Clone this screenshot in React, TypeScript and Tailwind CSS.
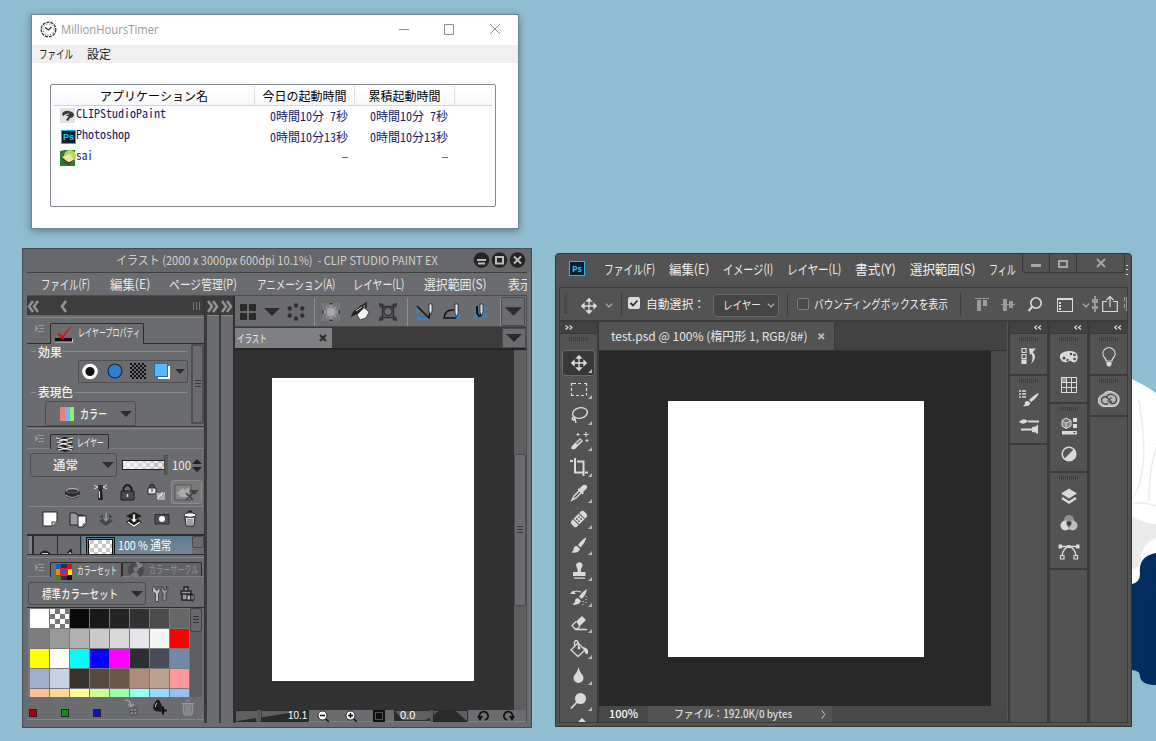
import React, { useLayoutEffect, useRef } from "react";

type KidProps = { className?: string; children?: React.ReactNode };

/* Text squeezed or stretched horizontally to the width of its box. */
function Fit({ className = "", children }: KidProps) {
  const box = useRef<HTMLSpanElement>(null);
  const inner = useRef<HTMLSpanElement>(null);
  useLayoutEffect(() => {
    if (!box.current || !inner.current) return;
    const natural = inner.current.offsetWidth;
    if (natural > 0) inner.current.style.transform = `scaleX(${box.current.offsetWidth / natural})`;
  }, [children]);
  return (
    <span ref={box} className={`block shrink-0 whitespace-pre leading-none ${className}`}>
      <span ref={inner} className="inline-block origin-left">{children}</span>
    </span>
  );
}

type IcoProps = KidProps & { vb?: string; crisp?: boolean };
function Ico({ className = "size-5", vb = "0 0 20 20", crisp, children }: IcoProps) {
  return (
    <svg viewBox={vb} className={`block shrink-0 ${className}`} fill="none" shapeRendering={crisp ? "crispEdges" : undefined}>
      {children}
    </svg>
  );
}

/* ---------- Desktop wallpaper ---------- */
function Wallpaper() {
  return (
    <Ico className="absolute left-[1132px] top-[370px] h-[320px] w-[24px]" vb="1132 370 24 320">
      <path d="M1132 379Q1145 385 1156 393V560L1132 590Z" fill="#fff" />
      <path d="M1138.500 399Q1146 440 1143 465Q1141 485 1133 498M1156 447Q1149 470 1149 501M1132 504Q1144 501 1156 506" stroke="#ededed" strokeWidth="1.5" />
      <path d="M1132 516Q1142 523 1156 524V538Q1140 545 1141 562Q1139 569 1132 569Z" fill="#ebebeb" />
      <path d="M1132 584Q1140 582 1140 574Q1138 556 1156 553V685Q1142 685 1140 677Q1141 671 1132 670Z" fill="#002f5f" />
    </Ico>
  );
}

/* ---------- MillionHoursTimer ---------- */
function TimerRow({ icon, name, nameClass, time }: { icon: React.ReactNode; name: string; nameClass: string; time: string | null }) {
  return (
    <div className="flex h-[21px] text-[12px] text-[#16216a]">
      <div className="flex w-[200px] pl-[6px]">
        <span className="pt-[2px]">{icon}</span>
        <Fit className={`mt-[1px] ${nameClass}`}>{name}</Fit>
      </div>
      {[0, 1].map((i) => (
        <div key={i} className="flex w-[100px] justify-end pr-[6px] pt-[4px]">
          {time ? <Fit className="w-[78px]">{time}</Fit> : <span className="mt-[5px] h-px w-[6px] bg-[#5a6294]" />}
        </div>
      ))}
    </div>
  );
}

function TimerWindow() {
  return (
    <div className="absolute left-[31px] top-[14px] flex h-[215px] w-[488px] flex-col border border-[#6d8792] bg-white font-['Noto_Sans_CJK_JP',sans-serif] shadow-[0_2px_8px_rgba(0,0,0,0.35)]">
      <div className="flex h-[30px] items-center pb-[2px] pl-[8px]">
        <Ico className="size-[17px]" vb="0 0 17 17">
          <circle cx="8.500" cy="8.500" r="7.300" stroke="#333" strokeWidth="1.300" strokeDasharray="3 1" />
          <circle cx="8.500" cy="8.500" r="5.500" stroke="#555" strokeWidth="1" strokeDasharray="1 1.880" />
          <path d="M5 6.500L8.500 9L11.500 6" stroke="#333" strokeWidth="1.200" />
        </Ico>
        <Fit className="ml-[4px] w-[98px] font-['Open_Sans',sans-serif] text-[13px] text-[#999]">MillionHoursTimer</Fit>
        <Ico className="ml-[240px] h-[12px] w-[104px]" vb="0 0 104 12">
          <path d="M0 6.500H10M45.500 1.500H54.500V11.500H45.500Z" stroke="#8c8c8c" />
          <path d="M91 1L101 11M101 1L91 11" stroke="#8c8c8c" />
        </Ico>
      </div>
      <div className="flex h-[18px] items-center gap-[14px] bg-[#f0f0f0] pl-[7px] text-[12px] text-[#222]">
        <Fit className="w-[34px]">ファイル</Fit>
        <Fit className="w-[24px]">設定</Fit>
      </div>
      <div className="ml-[18px] mt-[21px] flex h-[123px] w-[446px] flex-col rounded-[2px] border border-[#828790] px-[3px] pt-px font-['Noto_Sans_Mono_CJK_JP','Noto_Sans_CJK_JP',monospace]">
        <div className="flex h-[20px] border-b border-[#d5d5d5] bg-gradient-to-b from-white to-[#f7f8fa] text-[12px] font-medium text-black">
          <div className="flex w-[201px] items-center justify-center border-r border-[#dedfe1]"><Fit className="w-[108px]">アプリケーション名</Fit></div>
          <div className="flex w-[100px] items-center justify-center border-r border-[#dedfe1]"><Fit className="w-[84px]">今日の起動時間</Fit></div>
          <div className="flex w-[100px] items-center justify-center border-r border-[#dedfe1]"><Fit className="w-[72px]">累積起動時間</Fit></div>
        </div>
        <TimerRow
          name="CLIPStudioPaint"
          nameClass="w-[90px]"
          time="0時間10分 7秒"
          icon={
            <Ico className="size-[16px]" vb="0 0 16 16">
              <path d="M0 0H15V15H0Z" fill="#e2e2e2" />
              <path d="M2 6Q4 2 9 3Q14 4 14 7Q13 10 10 10L8 13L6 12L9 8Q7 9 6 7L10 6Q8 5 6 6L3 8Z" fill="#3a3a3a" />
            </Ico>
          }
        />
        <TimerRow
          name="Photoshop"
          nameClass="w-[54px]"
          time="0時間10分13秒"
          icon={
            <span className="ml-px mt-px flex h-[14px] w-[15px] items-center justify-center border border-[#17b4ea] bg-[#04202f] font-['Liberation_Sans',sans-serif] text-[9px] font-bold leading-none text-[#20c5f5]">Ps</span>
          }
        />
        <TimerRow
          name="sai"
          nameClass="w-[17px]"
          time={null}
          icon={
            <Ico className="size-[16px]" vb="0 0 16 16">
              <path d="M0 1L5 0H15V10L15 16H0Z" fill="#2e7d32" />
              <circle cx="10" cy="6" r="6" fill="#b5dc62" />
              <path d="M2 7L10 4L14 10L8 12Z" fill="#f3e6a4" />
              <path d="M1 8L9 13L14 10M3 12L10 15" stroke="#4b3312" />
            </Ico>
          }
        />
      </div>
    </div>
  );
}

/* ---------- CLIP STUDIO PAINT ---------- */
const Tri = ({ className = "h-[6px] w-[12px]" }: { className?: string }) => (
  <Ico className={className} vb="0 0 12 6"><path d="M0 0H12L6 6Z" fill="#2c2c2c" /></Ico>
);

const TabMenu = () => (
  <Ico className="h-[9px] w-[10px]" vb="0 0 10 9">
    <path d="M0 1L4 4.500L0 8Z" fill="#8e8f91" />
    <path d="M3 1.500H9M5 4.500H9M3 7.500H9" stroke="#9a9b9d" />
  </Ico>
);

function ChevronRow({ d }: { d: string }) {
  return <Ico className="h-[13px] w-[12px]" vb="0 0 12 13"><path d={d} stroke="#929292" strokeWidth="2.600" /></Ico>;
}

const Checker = ({ id, a, b, s }: { id: string; a: string; b: string; s: number }) => (
  <pattern id={id} width={s * 2} height={s * 2} patternUnits="userSpaceOnUse">
    <rect width={s * 2} height={s * 2} fill={a} />
    <path d={`M0 0H${s}V${s}H0ZM${s} ${s}H${s * 2}V${s * 2}H${s}Z`} fill={b} />
  </pattern>
);

function LayerProperty() {
  return (
    <>
      <div className="flex h-[26px] items-end border-b border-[#2c2c2c]">
        <div className="flex h-full w-[23px] items-center pb-[4px] pl-[8px]"><TabMenu /></div>
        <div className="mb-[-1px] flex h-[21px] w-[94px] items-center rounded-t-[2px] border border-b-0 border-[#2c2c2c] bg-[#6b6c6f] pb-[3px] pl-[4px]">
          <Ico className="mt-[3px] h-[18px] w-[19px]" vb="0 0 19 18">
            <path d="M0 13H17V17H0Z" fill="#111" /><path d="M0 17H18M17.500 14V17" stroke="#eee" strokeWidth="0.800" />
            <path d="M2 9L5 8L8 11Q11 4 18 1Q11 7 8 15Z" fill="#d31414" />
          </Ico>
          <Fit className="ml-[4px] w-[62px] text-[11px] text-[#eee]">レイヤープロパティ</Fit>
        </div>
      </div>
      <div className="flex h-[82px] overflow-hidden">
        <div className="flex w-[163px] shrink-0 flex-col text-[12px] text-[#f2f2f2]">
          <div className="flex h-[17px] items-center gap-px pl-[4px]">
            <i className="h-px w-[5px] bg-[#8c8d8f]" /><Fit className="ml-px w-[24px] font-medium">効果</Fit><i className="h-px w-[124px] bg-[#8c8d8f]" />
          </div>
          <div className="ml-[51px] flex h-[24px] w-[110px] items-center gap-[8px] rounded-[2px] border border-[#4e4f51] pl-[3px]">
            <Ico className="size-[17px]" vb="0 0 17 17"><circle cx="8" cy="8.500" r="6.200" fill="#111" stroke="#fff" strokeWidth="3.200" /></Ico>
            <Ico className="-ml-px size-[17px]" vb="0 0 17 17"><circle cx="7.500" cy="9" r="7" fill="#2e80d4" /><circle cx="9" cy="8" r="7" stroke="#1b2733" strokeWidth="1.200" /></Ico>
            <Ico className="-ml-px size-[16px]" vb="0 0 16 16" crisp><defs><Checker id="dots" a="#6b6c6f" b="#111" s={2} /></defs><rect width="16" height="16" fill="url(#dots)" /></Ico>
            <Ico className="size-[16px]" vb="0 0 16 16" crisp><path d="M4 3H16V16H4Z" fill="#fff" /><path d="M.500 .500H13.500V13.500H.500Z" fill="#55b8fb" stroke="#2b6da8" /></Ico>
            <Tri className="-ml-[3px] h-[5px] w-[10px]" />
          </div>
          <div className="flex h-[20px] items-center gap-px pl-[4px]">
            <i className="h-px w-[5px] bg-[#8c8d8f]" /><Fit className="ml-px w-[35px] font-medium">表現色</Fit><i className="h-px w-[113px] bg-[#8c8d8f]" />
          </div>
          <div className="ml-[18px] flex h-[26px] w-[91px] items-center rounded-t-[3px] border border-[#4e4f51] pl-[14px]">
            <Ico className="h-[14px] w-[14px]" vb="0 0 14 14" crisp><path d="M0 0H5V14H0Z" fill="#e9807d" /><path d="M5 0H10V14H5Z" fill="#76b6e6" /><path d="M10 0H14V14H10Z" fill="#8ef46c" /></Ico>
            <Fit className="ml-[6px] w-[27px] font-medium">カラー</Fit>
            <Tri className="ml-[13px] h-[6px] w-[12px]" />
          </div>
        </div>
        <div className="ml-px flex h-[80px] w-[13px] items-center justify-center rounded-[2px] border-2 border-[#4e4f51]">
          <Ico className="h-[8px] w-[6px]" vb="0 0 6 8" crisp><path d="M0 .500H6M0 3.500H6M0 6.500H6" stroke="#3a3a3a" /></Ico>
        </div>
      </div>
    </>
  );
}

function LayerPanel() {
  return (
    <>
      <div className="flex h-[20px] items-end border-b border-[#808183]">
        <div className="flex h-full w-[23px] items-center pl-[8px]"><TabMenu /></div>
        <div className="mb-[-1px] flex h-[15px] w-[59px] items-center rounded-t-[2px] border border-b-0 border-[#2c2c2c] bg-[#6b6c6f] pl-[5px]">
          <Ico className="mt-[4px] h-[16px] w-[18px]" vb="0 0 18 16">
            <path d="M0 3L9 1L18 3L9 6ZM0 8L9 5L18 8L9 11ZM0 13L9 10L18 13L9 16Z" fill="#222" />
            <path d="M0 2L12 5M3 5L17 2M2 9L16 6M1 6L15 10M2 14L17 11M2 11L16 14" stroke="#eee" strokeWidth="1.200" />
          </Ico>
          <Fit className="ml-[3px] w-[27px] text-[11px] text-[#eee]">レイヤー</Fit>
        </div>
      </div>
      <div className="flex h-[32px] items-center">
        <div className="ml-[3px] flex h-[24px] w-[87px] items-center rounded-[3px] border border-[#4e4f51] text-[12px] font-medium text-[#eee]">
          <Fit className="ml-[22px] w-[25px]">通常</Fit><Tri className="ml-[24px] h-[6px] w-[12px]" />
        </div>
        <Ico className="ml-[5px] h-[20px] w-[46px]" vb="0 0 46 20" crisp>
          <defs>
            <Checker id="op" a="#e9e9e9" b="#bdbdbd" s={4} />
            <linearGradient id="fade"><stop stopColor="#fff" stopOpacity=".6" /><stop offset="1" stopColor="#fff" stopOpacity="0" /></linearGradient>
          </defs>
          <path d="M.500 5.500H43V14.500H.500Z" fill="url(#op)" stroke="#222" />
          <path d="M1 6H42V14H1Z" fill="url(#fade)" />
          <path d="M42 0H46V20H42Z" fill="#5a5a5d" stroke="#47484a" />
        </Ico>
        <Fit className="ml-[4px] w-[19px] text-[12px] text-[#eee]">100</Fit>
        <Ico className="ml-px h-[15px] w-[10px]" vb="0 0 10 15"><path d="M0 6L5 1L10 6ZM0 9H10L5 14Z" fill="#222" /></Ico>
      </div>
      <div className="flex h-[24px] items-center pb-[2px] pl-[35px]">
        <Ico className="size-[21px]" vb="0 0 21 21"><ellipse cx="10.500" cy="11" rx="7.500" ry="5.500" fill="#2b2b2b" /><ellipse cx="10.500" cy="8.500" rx="6.500" ry="2.800" fill="#a9a9a9" /><ellipse cx="10.500" cy="9" rx="5.500" ry="1.800" fill="#333" /><path d="M4 13Q10 18 17 13" stroke="#aaa" /></Ico>
        <Ico className="ml-[7px] size-[21px]" vb="0 0 21 21"><path d="M9 7H12L13 18H8Z" fill="#222" /><path d="M9.500 9V16" stroke="#ddd" /><path d="M8 3H13V7H8Z" fill="#333" /><path d="M4 3L8 5L4 7M17 3L13 5L17 7" stroke="#ddd" /></Ico>
        <Ico className="ml-[6px] size-[21px]" vb="0 0 21 21"><path d="M6.500 10V6Q10.500 0 14.500 6V10" stroke="#1c1c1c" strokeWidth="2" /><path d="M4 9H17V18H4Z" fill="#4a4a4a" stroke="#1c1c1c" /><path d="M10.500 12V15" stroke="#ddd" strokeWidth="1.500" /></Ico>
        <Ico className="ml-[8px] size-[21px]" vb="0 0 21 21"><path d="M4 7V4Q6 1 8 4V7" stroke="#222" strokeWidth="1.500" /><path d="M2 6H10V12H2Z" fill="#e8e8e8" stroke="#222" /><path d="M6 7V10" stroke="#222" /><path d="M10 11H19V18H12" fill="#aaa" /><path d="M12 17V14H15V11H19" stroke="#fff" strokeDasharray="2 1" /></Ico>
        <div className="ml-[4px] flex h-[24px] w-[31px] items-center justify-center rounded-[3px] border border-[#8b8c8e] bg-[#77787a]">
          <Ico className="h-[17px] w-[25px]" vb="0 0 25 17"><path d="M1 1H17V16H1Z" fill="#858688" stroke="#555" /><path d="M3 9L9 4L11 6L15 3V13H7Z" fill="#a8a9aa" /><path d="M12 9L19 16M19 9L12 16" stroke="#444" strokeWidth="1.600" /><path d="M15 6H25L20 11Z" fill="#444" /></Ico>
        </div>
      </div>
      <div className="mx-px mt-px h-px bg-[#858688]" />
      <div className="flex h-[27px] items-center gap-[8px] pb-[3px] pl-[13px]">
        <Ico><path d="M3 3H17V13L12 17H3Z" fill="#fff" stroke="#222" /><path d="M17 13H12V17" fill="#ccc" stroke="#444" /></Ico>
        <Ico><path d="M2 4H8L9 6H15V16H2Z" fill="#99999b" stroke="#222" /><path d="M10 7H18V15L15 18H10Z" fill="#fff" stroke="#222" /><path d="M18 15H15V18" stroke="#444" /></Ico>
        <Ico><path d="M3 12L6 10H14L17 12L10 17Z" fill="#444648" /><path d="M3 8L7 5V9ZM17 8L13 5V9Z" fill="#444648" /><path d="M8.500 3H11.500V9H14L10 13L6 9H8.500Z" fill="#909194" stroke="#55565a" strokeWidth=".7" /></Ico>
        <Ico><path d="M2 7L10 3L18 7L10 11ZM2 13L6 10H14L18 13L10 18.500Z" fill="#1b1b1b" /><path d="M4 13L10 17L16 13" stroke="#f5f5f5" strokeWidth="1.500" /><path d="M8.700 5H11.300V10H13.500L10 14L6.500 10H8.700Z" fill="#fff" stroke="#222" strokeWidth=".8" /></Ico>
        <Ico><path d="M3 5.500H17V15H3Z" fill="#4e4f51" stroke="#2a2a2a" /><circle cx="10" cy="10" r="3" fill="#fff" /></Ico>
        <Ico><path d="M5 8H15L14 17H6Z" fill="#ddd" stroke="#222" /><path d="M8 10V16M10 10V16M12 10V16" stroke="#444" strokeWidth=".8" /><ellipse cx="10" cy="6" rx="6" ry="2.200" fill="#fff" stroke="#222" /><path d="M8 3Q10 1 12 3" stroke="#222" strokeWidth="1.500" /></Ico>
      </div>
      <div className="flex h-[21px] overflow-hidden border-b border-t-2 border-[#2d2d2d]">
        <div className="ml-[2px] w-[3px] bg-[#808183]" />
        <div className="flex w-[25px] items-end justify-center border-l-2 border-[#2c2c2c]"><Ico className="h-[4px] w-[12px]" vb="0 0 12 4"><path d="M1 3Q6 -2 11 3V4H1Z" fill="#222" /><path d="M3 3.500H9" stroke="#ccc" /></Ico></div>
        <div className="flex w-[24px] items-end justify-center border-x border-[#2c2c2c]"><Ico className="h-[6px] w-[10px]" vb="0 0 10 6"><path d="M3 5L7 1L8 5" fill="#222" stroke="#222" /><path d="M6 4V6" stroke="#fff" /></Ico></div>
        <div className="ml-px flex w-[111px] items-center bg-gradient-to-b from-[#5d7c8f] to-[#75899a]">
          <Ico className="ml-[4px] h-[19px] w-[29px]" vb="0 0 29 19" crisp>
            <defs><Checker id="th" a="#fff" b="#c9c9c9" s={4} /></defs>
            <path d="M0 1H29V19H0Z" fill="#111" /><path d="M1 2H28V19H1Z" fill="#5d7c8f" /><path d="M2 3H27V19H2Z" fill="#111" /><path d="M3 4H26V19H3Z" fill="url(#th)" />
          </Ico>
          <Fit className="ml-[3px] w-[53px] text-[12px] text-white">100 % 通常</Fit>
        </div>
        <div className="h-[12px] w-[12px] rounded-[2px] border border-[#4a4b4d]" />
      </div>
    </>
  );
}

const SWATCHES = [
  "bg-white", "bg-check", "bg-[#0a0a0d]", "bg-[#191919]", "bg-[#252525]", "bg-[#323232]", "bg-[#4b4b4b]", "bg-[#666666]",
  "bg-[#7d7d7d]", "bg-[#989898]", "bg-[#b1b1b1]", "bg-[#cacaca]", "bg-[#d8d8d8]", "bg-[#e4e5e8]", "bg-[#f3f4f4]", "bg-[#ff0000]",
  "bg-[#ffff00]", "bg-white", "bg-[#00ffff]", "bg-[#0000ff]", "bg-[#ff00ff]", "bg-[#2c2f2f]", "bg-[#474b57]", "bg-[#7489a7]",
  "bg-[#a1aec9]", "bg-[#c8d0e4]", "bg-[#37322d]", "bg-[#57493d]", "bg-[#6b5846]", "bg-[#b18c7b]", "bg-[#bda191]", "bg-[#ff9999]",
  "bg-[#ffbf99]", "bg-[#ffd999]", "bg-[#ffff99]", "bg-[#ccff99]", "bg-[#99ffaa]", "bg-[#99ffee]", "bg-[#99d9ff]", "bg-[#99bfee]",
];

function ColorSet() {
  return (
    <>
      <div className="flex h-[19px] items-end border-b border-[#808183]">
        <div className="flex h-full w-[23px] items-center pl-[8px]"><TabMenu /></div>
        <div className="mb-[-1px] flex h-[15px] w-[72px] items-center rounded-t-[2px] border border-b-0 border-[#2c2c2c] bg-[#6b6c6f] pl-[5px]">
          <Ico className="mt-[3px] size-[16px]" vb="0 0 16 16" crisp>
            <path d="M0 0H5V5H0Z" fill="#1c59c8" /><path d="M5 0H11V5H5ZM5 11H11V16H5Z" fill="#262f58" /><path d="M11 0H16V5H11Z" fill="#cc1b1b" />
            <path d="M0 5H5V11H0Z" fill="#e48a1b" /><path d="M11 5H16V11H11Z" fill="#f0e61a" /><path d="M0 11H5V16H0Z" fill="#238e25" /><path d="M11 11H16V16H11Z" fill="#111" />
            <path d="M5 5H11V11H5Z" fill="#265fdb" stroke="#f21717" strokeWidth="2" />
          </Ico>
          <Fit className="ml-[5px] w-[40px] text-[11px] text-[#eee]">カラーセット</Fit>
        </div>
        <div className="flex h-[14px] w-[80px] items-center border-x border-t border-[#2c2c2c] bg-[#616265] pl-[5px]">
          <Ico className="size-[16px]" vb="0 0 16 16"><circle cx="8" cy="8" r="8" fill="#484a4c" /><path d="M8 0A8 8 0 0 1 15 4L10 7Z" fill="#858688" /><path d="M2 13A8 8 0 0 0 12 15L8 9Z" fill="#77787a" /><circle cx="8" cy="7" r="2.500" fill="#77787b" /></Ico>
          <Fit className="ml-[5px] w-[49px] text-[11px] text-[#929395]">カラーサークル</Fit>
        </div>
      </div>
      <div className="flex h-[30px] items-center pt-[3px]">
        <div className="ml-px flex h-[23px] w-[118px] items-center rounded-[3px] border border-[#4a4b4d] text-[12px] font-medium text-[#eee]">
          <Fit className="ml-[13px] w-[76px]">標準カラーセット</Fit><Tri className="ml-[13px] h-[6px] w-[12px]" />
        </div>
        <Ico className="ml-[5px] size-[18px]" vb="0 0 18 18">
          <path d="M3 1Q1 3 1.500 6Q3 8 4.500 8.500V16Q6 17.500 7.500 16V8.500Q9.500 7 9 4L7 1V5H5Z" fill="#c4c4c4" stroke="#333" strokeWidth=".8" />
          <path d="M11 1Q9.500 4 10.500 6L12 8.500V15.500Q13.500 17 15 15.500V8.500Q17.500 6 17 3L15.500 1V5H13Z" fill="#999" stroke="#333" strokeWidth=".8" />
        </Ico>
        <Ico className="ml-[10px] size-[18px]" vb="0 0 18 18"><path d="M5 5V2H9V5M2 6H12V9H2ZM3 9H11V15H3Z" stroke="#222" fill="#999" strokeWidth="1.500" /><path d="M8 10H15V15H8ZM11.500 10V15M13 17V8" stroke="#222" fill="#bbb" /></Ico>
      </div>
      <div className="flex h-[90px] overflow-hidden border-t border-[#2c2c2c] pl-px">
        <div className="flex h-[89px] w-[162px] flex-wrap content-start gap-px overflow-hidden bg-[#77787a] pl-[2px] pt-px">
          {SWATCHES.map((c, i) =>
            c === "bg-check" ? (
              <Ico key={i} className="size-[19px]" vb="0 0 19 19" crisp><path d="M0 0H19V19H0Z" fill="#fff" /><path d="M5 0H10V5H5ZM15 0H19V5H15ZM0 5H5V10H0ZM10 5H15V10H10ZM5 10H10V15H5ZM15 10H19V15H15ZM0 15H5V19H0ZM10 15H15V19H10Z" fill="#77787a" /></Ico>
            ) : (
              <i key={i} className={`size-[19px] ${c}`} />
            ),
          )}
        </div>
        <div className="flex h-full w-[12px] items-start bg-[#5d5e60]">
          <div className="flex h-[24px] w-[12px] items-center justify-center rounded-[2px] border border-[#3f4042] bg-[#68696c]"><Ico className="h-[8px] w-[6px]" vb="0 0 6 8" crisp><path d="M0 .500H6M0 3.500H6M0 6.500H6" stroke="#333" /></Ico></div>
        </div>
      </div>
      <div className="flex h-[23px] items-end border-b border-[#858688] pb-[2px] pl-[2px]">
        <i className="size-[8px] border border-[#222] bg-[#b00000]" />
        <i className="ml-[24px] size-[8px] border border-[#222] bg-[#0c930c]" />
        <i className="ml-[24px] size-[8px] border border-[#222] bg-[#0b13d0]" />
        <Ico className="mb-px ml-[22px] size-[18px]" vb="0 0 18 18"><path d="M2 2Q8 2 8 8M5 6L8 9L11 6" stroke="#9b9c9e" strokeWidth="1.500" /><path d="M7 10H14V17H7ZM7 13.500H14M10.500 10V17" fill="#85868a" stroke="#4e4f51" /></Ico>
        <Ico className="mb-px ml-[10px] size-[18px]" vb="0 0 18 18"><path d="M7 1Q2 6 2 9A4.500 4.500 0 0 0 11 9Q11 6 7 1Z" fill="#1c1c1c" /><path d="M4.500 9Q4 7 6 5" stroke="#ccc" /><path d="M12 8.500V16.500M8 12.500H16" stroke="#111" strokeWidth="2.200" /></Ico>
        <Ico className="mb-px ml-[10px] size-[18px]" vb="0 0 18 18"><path d="M4 7H14L13 17H5Z" fill="#77787b" stroke="#97989a" /><path d="M7 8V16M9 8V16M11 8V16M3 5.500H15M7 3Q9 1 11 3" stroke="#97989a" /></Ico>
      </div>
    </>
  );
}

function WinButton({ d }: { d: string }) {
  return <Ico className="size-[17px]" vb="0 0 17 17"><circle cx="8.500" cy="8" r="7.800" fill="#252525" /><path d={d} stroke="#bdbdbd" strokeWidth="2" /></Ico>;
}

function ClipToolbar() {
  return (
    <div className="flex h-[31px] items-center border-b border-[#4a4b4d] bg-[#6b6c6f] pt-px">
      <Ico className="ml-[4px] h-[17px] w-[18px]" vb="0 0 18 17" crisp><path d="M1 1H8V8H1ZM10 1H17V8H10ZM1 10H8V17H1ZM10 10H17V17H10Z" fill="#2b2b2b" /></Ico>
      <Tri className="ml-[7px] h-[8px] w-[16px]" />
      <Ico className="ml-[7px] size-[18px]" vb="0 0 18 18"><g fill="#303030"><circle cx="9" cy="2.500" r="2.200" /><circle cx="15.300" cy="5.500" r="2.200" /><circle cx="15.300" cy="12.500" r="2.200" /><circle cx="9" cy="15.500" r="2.200" /><circle cx="2.700" cy="12.500" r="2.200" /><circle cx="2.700" cy="5.500" r="2.200" /></g></Ico>
      <i className="ml-[9px] h-[28px] w-px bg-[#8e8f91]" />
      <Ico className="ml-[7px] size-[18px]" vb="0 0 18 18"><path d="M0 0H18V18H0Z" fill="#77787a" /><path d="M7 1H11V4H14V7H17V11H14V14H11V17H7V14H4V11H1V7H4V4H7Z" fill="#929395" /><circle cx="9" cy="9" r="5" fill="#a5a6a8" stroke="#7d7e80" /><path d="M7 .800H11M7 17.200H11M.800 7V11M17.200 7V11" stroke="#404143" strokeWidth="1.600" /></Ico>
      <Ico className="ml-[10px] size-[20px]" vb="0 0 20 20"><path d="M5 9L12 4L19 10L16 16L10 18Z" fill="#f3f3f3" stroke="#333" strokeWidth=".8" /><path d="M7 7Q2 9 1 15Q4 13 8 12L14 6L11 3Z" fill="#222" /><path d="M12 4L16 1V6" stroke="#222" strokeWidth="1.500" /><path d="M6 9L12 5" stroke="#ddd" /></Ico>
      <Ico className="ml-[8px] size-[20px]" vb="0 0 20 20"><path d="M4.500 4.500H15.500V15.500H4.500Z" stroke="#343536" strokeWidth="1.500" /><path d="M1 1L6 2L2 6ZM19 1L14 2L18 6ZM1 19L6 18L2 14ZM19 19L14 18L18 14Z" fill="#343536" /><path d="M2 2L6 6M18 2L14 6M2 18L6 14M18 18L14 14" stroke="#343536" strokeWidth="2" /><circle cx="10" cy="9.500" r="4.200" fill="#6b6c6f" stroke="#343536" strokeWidth="1.500" /></Ico>
      <i className="ml-[9px] h-[28px] w-px bg-[#8e8f91]" />
      <Ico className="ml-[7px] h-[20px] w-[19px]" vb="0 0 19 20"><path d="M2.500 5V17H14" stroke="#1e8bea" strokeWidth="1.500" /><path d="M2 4L14 16L15 9" stroke="#111" strokeWidth="1.500" /><path d="M14 2V9L15.500 13L17 9V2Z" fill="#eee" stroke="#222" strokeWidth=".8" /></Ico>
      <Ico className="ml-[9px] h-[20px] w-[20px]" vb="0 0 20 20"><path d="M2 16H16Q18 12 14 9" stroke="#1e8bea" strokeWidth="1.600" /><path d="M13 16H1Q2 7 11 8" stroke="#111" strokeWidth="1.500" /><path d="M12 2V11L13.500 15L15 11V2Z" fill="#eee" stroke="#222" strokeWidth=".8" /></Ico>
      <Ico className="ml-[8px] h-[20px] w-[20px]" vb="0 0 20 20"><path d="M5 3V18M12.500 3V18M2 6H17M2 14H17" stroke="#1e8bea" strokeWidth="1.600" /><path d="M6 4V11L8 14Q11 14 10.500 8" stroke="#111" strokeWidth="2" /><path d="M9 2V10L10.500 14L12 10V2Z" fill="#ddd" stroke="#222" strokeWidth=".8" /></Ico>
      <i className="ml-[9px] h-[28px] w-px bg-[#8e8f91]" />
      <div className="flex h-[29px] w-[24px] items-center justify-center rounded-[2px] border border-[#4a4b4d]"><Tri className="h-[9px] w-[17px]" /></div>
    </div>
  );
}

function ClipStatus() {
  return (
    <div className="flex h-[12px] items-center border-b border-[#7d7e80] bg-[#6b6c6f]">
      <Ico className="h-[12px] w-[74px]" vb="1 0 74 12">
        <path d="M1.500 .500H23.500V11.500H1.500ZM27 .500H74.500V11.500H27Z" stroke="#2a2a2a" fill="#5f6063" /><path d="M4 11L22 8V11ZM27 7.500L74 0V11H27Z" fill="#2a2a2a" /><path d="M23 0H27V12H23Z" fill="#58595b" />
      </Ico>
      <span className="z-10 -ml-[21px] flex w-[20px] font-['Liberation_Sans',sans-serif] text-[11px] leading-none text-white"><Fit className="w-[19px]">10.1</Fit></span>
      <Ico className="ml-[9px] size-[12px]" vb="0 0 12 12"><circle cx="5.500" cy="5.500" r="4.500" fill="#fff" stroke="#222" /><path d="M3 5.500H8M9 9L12 12" stroke="#111" strokeWidth="1.500" /></Ico>
      <Ico className="ml-[16px] size-[12px]" vb="0 0 12 12"><circle cx="5.500" cy="5.500" r="4.500" fill="#fff" stroke="#222" /><path d="M3 5.500H8M5.500 3V8M9 9L12 12" stroke="#111" strokeWidth="1.500" /></Ico>
      <Ico className="ml-[16px] size-[12px]" vb="0 0 12 12" crisp><path d="M0 0H12V12H0Z" fill="#111" /><path d="M2.500 2.500H9.500V9.500H2.500Z" stroke="#555" /></Ico>
      <div className="ml-[9px] flex h-full w-[36px] items-center border border-r-0 border-[#2a2a2a] bg-[#5f6063] font-['Liberation_Sans',sans-serif] text-[11px] text-white">
        <Ico className="h-[10px] w-[35px]" vb="0 0 35 10"><path d="M0 0L9 10H0ZM35 7L28 10H35Z" fill="#2a2a2a" /></Ico>
        <Fit className="z-10 -ml-[30px] w-[15px]">0.0</Fit>
      </div>
      <Ico className="h-[12px] w-[38px]" vb="0 0 38 12"><path d="M3 .500H37.500V11.500H3Z" stroke="#2a2a2a" fill="#5f6063" /><path d="M3 5Q16 -6 28 3L37 11H3Z" fill="#2a2a2a" /><path d="M0 0H3V12H0Z" fill="#58595b" /></Ico>
      <Ico className="ml-[9px] size-[12px]" vb="0 0 12 12"><path d="M3 8A4.300 4.300 0 1 1 8 10" stroke="#111" strokeWidth="1.800" /><path d="M0 6H6L3 11Z" fill="#111" /></Ico>
      <Ico className="ml-[14px] size-[12px]" vb="0 0 12 12"><path d="M9 8A4.300 4.300 0 1 0 4 10" stroke="#111" strokeWidth="1.800" /><path d="M12 6H6L9 11Z" fill="#111" /></Ico>
    </div>
  );
}

function ClipWindow() {
  return (
    <div className="absolute left-[22px] top-[248px] flex h-[480px] w-[510px] flex-col overflow-hidden border border-[#48494b] bg-[#6b6c6f] font-['Noto_Sans_CJK_JP',sans-serif]">
      <div className="flex h-[23px] items-center bg-[#66676a] pb-[2px]">
        <Fit className="ml-[93px] w-[322px] text-[12px] text-[#d0d0d0]">{"イラスト (2000 x 3000px 600dpi 10.1%)  - CLIP STUDIO PAINT EX"}</Fit>
        <div className="ml-[35px] flex gap-px pt-[2px]">
          <WinButton d="M4 8H13M5 11.500H12" /><WinButton d="M5 5H12V11.500H5Z" /><WinButton d="M5 4.500L12 11.500M12 4.500L5 11.500" />
        </div>
      </div>
      <div className="ml-[4px] flex h-[24px] w-[500px] items-center overflow-hidden border-b border-t border-b-[#4c4d4f] border-t-[#3f4042] pb-[2px] text-[13px] text-[#eaeaea]">
        <Fit className="ml-[14px] w-[49px]">ファイル(F)</Fit>
        <Fit className="ml-[20px] w-[40px]">編集(E)</Fit>
        <Fit className="ml-[19px] w-[68px]">ページ管理(P)</Fit>
        <Fit className="ml-[20px] w-[78px]">アニメーション(A)</Fit>
        <Fit className="ml-[18px] w-[51px]">レイヤー(L)</Fit>
        <Fit className="ml-[20px] w-[63px]">選択範囲(S)</Fit>
        <Fit className="ml-[21px] w-[24px]">表示</Fit>
      </div>
      <div className="ml-[4px] flex h-[427px] w-[500px]">
        <div className="flex w-[178px] shrink-0 flex-col border-r border-[#333]">
          <div className="flex h-[19px] items-center bg-[#3c3c3c] pt-px">
            <ChevronRow d="M6 1L2 6.500L6 12M11 1L7 6.500L11 12" />
            <span className="ml-[19px]"><ChevronRow d="M8 1L4 6.500L8 12" /></span>
            <Ico className="ml-[123px] h-[8px] w-[8px]" vb="0 0 8 8" crisp><path d="M.500 0V8M3.500 0V8M6.500 0V8" stroke="#777" /></Ico>
          </div>
          <div className="h-[3px] border-b border-[#858688]" />
          <LayerProperty />
          <div className="h-[3px] border-b border-t border-b-[#858688] border-t-[#3a3a3a]" />
          <LayerPanel />
          <div className="h-[3px] border-b border-[#858688]" />
          <ColorSet />
        </div>
        {[0, 1].map((i) => (
          <div key={i} className="w-[14px] shrink-0 border-l-2 border-[#3a3b3c]">
            <div className="flex h-[19px] items-center bg-[#3c3c3c] pt-px"><ChevronRow d="M1 1L5 6.500L1 12M6 1L10 6.500L6 12" /></div>
            <div className="h-px bg-[#858688]" />
          </div>
        ))}
        <div className="flex w-[294px] shrink-0 flex-col border-l-2 border-r border-l-[#2f2f2f] border-r-[#4e4f51]">
          <ClipToolbar />
          <div className="flex h-[23px] border-b-2 border-[#252525] bg-[#3b3b3b] pt-px">
            <div className="flex h-[20px] w-[97px] items-center bg-[#7e8083] pl-[2px] text-[11px] text-[#eee]">
              <Fit className="w-[30px]">イラスト</Fit>
              <Ico className="ml-[52px] size-[8px]" vb="0 0 8 8"><path d="M1 1L7 7M7 1L1 7" stroke="#2e2e2e" strokeWidth="2.400" /></Ico>
            </div>
            <div className="ml-auto flex h-[20px] w-[24px] items-center justify-center border border-[#4a4b4d] bg-[#6b6c6f]"><Tri className="h-[8px] w-[16px]" /></div>
          </div>
          <div className="flex h-[360px] bg-[#323232]">
            <div className="flex w-[279px] pl-[37px] pt-[28px]"><div className="h-[303px] w-[202px] bg-white" /></div>
            <div className="flex w-[12px] flex-col bg-[#5d5e60] pt-[104px]">
              <div className="flex h-[152px] w-[12px] items-center justify-center rounded-[2px] border border-[#4a4b4d] bg-[#6b6c6f]"><Ico className="h-[8px] w-[6px]" vb="0 0 6 8" crisp><path d="M0 .500H6M0 3.500H6M0 6.500H6" stroke="#333" /></Ico></div>
            </div>
          </div>
          <ClipStatus />
        </div>
      </div>
    </div>
  );
}

/* ---------- Photoshop ---------- */
const W = "#dadada";
const Grip = () => (
  <Ico className="mt-[3px] h-[4px] w-[20px] self-center" vb="0 0 20 4" crisp><path d="M.500 0V4M2.500 0V4M4.500 0V4M6.500 0V4M8.500 0V4M10.500 0V4M12.500 0V4M14.500 0V4M16.500 0V4M18.500 0V4" stroke="#3f3f3f" /></Ico>
);
const Chev = ({ className = "" }: { className?: string }) => <Ico className={`h-[5px] w-[8px] ${className}`} vb="0 0 8 5"><path d="M.700 .700L4 4L7.300 .700" stroke="#b5b5b5" strokeWidth="1.200" /></Ico>;
const MoveShape = () => <path d="M10 3V17M3 10H17M7.800 5L10 2.700L12.200 5ZM7.800 15L10 17.300L12.200 15ZM5 7.800L2.700 10L5 12.200ZM15 7.800L17.300 10L15 12.200Z" fill={W} stroke={W} strokeWidth="1.300" />;

const TOOLS: React.ReactNode[] = [
  <MoveShape />,
  <path d="M2.500 4V7M2.500 9V12M2.500 14V16.500H5M7 16.500H10M12 16.500H15M17.500 16.500V14M17.500 12V9M17.500 7V4.500H15M12 4.500H9M7 4.500H3" stroke={W} strokeWidth="1.200" />,
  <g stroke={W} strokeWidth="1.400"><ellipse cx="11" cy="8" rx="7.500" ry="5.200" transform="rotate(-12 11 8)" /><path d="M5 12Q2 13 4 15Q7 14 5 12M6 14L7 18" /></g>,
  <g fill={W}><path d="M3 15L11 7L14 10L6 18Q3 19 2 17Z" /><path d="M7 12.500L11.500 8.500L12.500 9.500L8 13.500Z" fill="#666" /><path d="M9 2V5M7.500 3.500H10.500M17 1V6M14.500 3.500H19.500M18 8V11M16.500 9.500H19.500" stroke={W} /></g>,
  <path d="M1 4H4M6 1V15.500H14M8 4.500H14.500V19M16 15.500H19" stroke={W} strokeWidth="2" />,
  <g><path d="M11 7L5 13L3 17L7 15L13 9" stroke={W} strokeWidth="1.500" /><path d="M10 6L14 2Q17 1 18 3Q19 5 15 8L14 9L15 10L13.500 11.500L8.500 6.500L10 5Z" fill={W} /></g>,
  <g transform="rotate(-45 10 10)"><rect x="1" y="6" width="18" height="8" rx="2.500" fill={W} /><path d="M6 6V14M14 6V14" stroke="#535353" /><g fill="#535353"><circle cx="8.500" cy="8.500" r=".9" /><circle cx="11.500" cy="8.500" r=".9" /><circle cx="8.500" cy="11.500" r=".9" /><circle cx="11.500" cy="11.500" r=".9" /></g></g>,
  <path d="M17.500 2.500Q14 3 9 10L11.500 12.500Q16 8 17.500 2.500ZM8 11Q4 11 4.500 15L2.500 17.500Q9 19 11 14Z" fill={W} />,
  <path d="M7 4.500A3.300 3.300 0 1 1 12.500 7Q11.500 9 12 11H16.500V15H4V11H8.500Q9 9 8 7ZM5 16.500H16V17.800H5Z" fill={W} />,
  <g fill={W}><path d="M18 2Q14 4 10 9.500L12.500 12Q17 8 18 2ZM9 11Q5.500 11.500 6 15L3.500 17.500Q10 18.500 12 14Z" /><path d="M1 7H7L4 3.500Z" /><path d="M4 5Q8 3 12 5" stroke={W} fill="none" /><path d="M17 9V16M14 14V18" stroke={W} strokeDasharray="1 2" fill="none" /></g>,
  <g><path d="M7 8.500L13 3L17 7L10.500 13.500Z" fill={W} /><path d="M7 8.500L3 12.500L6 16H8.500L10.500 13.500M6 16.500H18" stroke={W} strokeWidth="1.300" /></g>,
  <g><path d="M2 11L9 4L16 11L9 17.500Z" stroke={W} strokeWidth="1.300" /><path d="M5.500 7V3Q7 0 9 3L10 9" stroke={W} strokeWidth="1.400" /><circle cx="10" cy="9" r="1.400" fill={W} /><path d="M14 8Q20 9 19 14Q17 17 16 13Z" fill={W} /></g>,
  <path d="M9.500 2Q10 6 13 9.500A5 5 0 1 1 6 9.500Q9 6 9.500 2Z" fill={W} />,
  <g><circle cx="11.500" cy="7.500" r="5.500" fill={W} /><path d="M8 11L2 17.500" stroke={W} strokeWidth="1.800" /></g>,
];

function ToolColumn() {
  return (
    <div className="flex w-[38px] shrink-0 flex-col overflow-hidden border-r border-[#383838]">
      <div className="flex h-[12px] shrink-0 items-center border-b border-[#383838] bg-[#424242] pl-[5px]">
        <Ico className="h-[5px] w-[8px]" vb="0 0 8 5"><path d="M.500 .500L3 2.500L.500 4.500M4.500 .500L7 2.500L4.500 4.500" stroke={W} strokeWidth="1.200" /></Ico>
      </div>
      <Grip />
      <div className="mt-[9px] flex flex-col">
        {TOOLS.map((t, i) => (
          <div key={i} className={`ml-[2px] flex h-[26px] w-[33px] items-center rounded-[3px] pl-[7px] ${i === 0 ? "border border-[#6a6a6a] bg-[#383838]" : ""}`}>
            <Ico className={i === 0 ? "-ml-px size-5" : "size-5"}>{t}</Ico>
            <Ico className="ml-[-1px] mt-[15px] size-[4px]" vb="0 0 4 4"><path d="M0 4L4 0V4Z" fill="#b8b8b8" /></Ico>
          </div>
        ))}
        <Ico className="ml-[18px] mt-[4px] h-[4px] w-[8px]" vb="0 0 8 4"><path d="M0 4L4 0L8 4Z" fill={W} /></Ico>
      </div>
    </div>
  );
}

function PanelSection({ className, children }: KidProps) {
  return <div className={`flex shrink-0 flex-col items-center border-b-2 border-[#3b3b3b] pl-px ${className}`}><Grip />{children}</div>;
}
function PanelColumn({ children }: KidProps) {
  return (
    <div className="flex w-[40px] shrink-0 flex-col border-l-2 border-r border-[#3b3b3b]">
      <div className="flex h-[12px] items-center justify-end border-b border-[#383838] bg-[#424242] pr-[5px]">
        <Ico className="h-[5px] w-[8px]" vb="0 0 8 5"><path d="M3 .500L.500 2.500L3 4.500M7 .500L4.500 2.500L7 4.500" stroke={W} strokeWidth="1.200" /></Ico>
      </div>
      {children}
    </div>
  );
}

function Panels() {
  return (
    <div className="flex">
      <PanelColumn>
        <PanelSection className="h-[42px]">
          <Ico className="mt-[4px] size-5"><path d="M3 3.500H7V7.500H3ZM3 9.500H7V13.500H3Z" stroke={W} strokeWidth="1.200" /><path d="M2.400 14.500H7.600V19H2.400Z" fill={W} /><path d="M12 6Q20 11 12 19Q15 12 12 8" fill={W} /><path d="M10 3.500H17L11 10Z" fill={W} /></Ico>
        </PanelSection>
        <PanelSection className="h-[69px]">
          <Ico className="mt-[5px] h-[20px] w-[22px]" vb="0 0 22 20"><path d="M1 3H3M1 6H3M1 9H3M4 3H8M4 6H8M4 9H8" stroke={W} strokeWidth="1.300" /><path d="M21 5Q17 6 11 12L13 14Q19 10 21 5ZM10 13Q6 13 7 16L5 18Q11 19 12.500 15Z" fill={W} /></Ico>
          <Ico className="mt-[9px] h-[18px] w-[22px]" vb="0 0 22 18"><path d="M1 5Q5 0 10 4Q6 9 1 5Z" fill={W} /><path d="M10 4.500H21M3 12.500H14" stroke={W} strokeWidth="2" /><path d="M14 10Q19 10 20 7V17Q18 15 14 15Z" fill={W} /></Ico>
        </PanelSection>
      </PanelColumn>
      <PanelColumn>
        <PanelSection className="h-[70px]">
          <Ico className="mt-[6px] size-5"><path d="M1 11C0 6 5 4 11 4C18 4 20 9 18 13C17 17 13 15 12 14C10 13 9 16 5 15Q2 14 1 11Z" fill={W} /><g fill="#4a4a4a"><circle cx="5" cy="11" r="1.500" /><circle cx="8.500" cy="13" r="1.200" /><circle cx="12" cy="7" r="1.300" /><circle cx="15.500" cy="8" r="1.300" /><circle cx="15.500" cy="12" r="1.300" /></g></Ico>
          <Ico className="mt-[8px] size-5" crisp><path d="M2 2H7V7H2Z" fill="#999" /><path d="M2.500 2.500H17.500V17.500H2.500ZM2.500 7.500H17.500M2.500 12.500H17.500M7.500 2.500V17.500M12.500 2.500V17.500" stroke={W} /></Ico>
        </PanelSection>
        <PanelSection className="h-[69px]">
          <Ico className="mt-[5px] size-5"><path d="M7 2L12 4.500V10L7 12.500L3 10V4.500ZM3 4.500L7 7L12 4.500M7 7V12" stroke={W} fill="#888" /><path d="M14 2H18V6H14ZM14 8H18V12H14ZM3 15H18V18.500H3Z" fill={W} /><path d="M14 16H17L15.500 17.500Z" fill="#444" /></Ico>
          <Ico className="mt-[8px] size-5"><circle cx="10" cy="10" r="6.800" stroke={W} strokeWidth="1.500" /><path d="M15 5A7 7 0 1 1 5 15Z" fill={W} /></Ico>
        </PanelSection>
        <PanelSection className="h-[97px]">
          <Ico className="mt-[6px] size-5"><path d="M10 2.500L18 7.500L10 12.500L2 7.500Z" fill={W} /><path d="M3 12L10 16.500L17 12" stroke={W} strokeWidth="2.400" /></Ico>
          <Ico className="mt-[7px] size-5"><circle cx="10" cy="7" r="5" fill="#929292" /><circle cx="6.500" cy="12.500" r="5" fill="#dadada" /><circle cx="13.500" cy="12.500" r="5" fill="#bdbdbd" /><path d="M7 8.500Q10 7 13 8.500Q13 12 10 15Q7 12 7 8.500Z" fill="#777" /><circle cx="10" cy="10.500" r="2" fill="#3c3c3c" /></Ico>
          <Ico className="mt-[9px] h-[20px] w-[22px]" vb="0 0 22 20"><path d="M3 4.500H19M4 14Q5 6 11 4.500Q17 6 18 14" stroke={W} strokeWidth="1.300" /><path d="M.500 2.500H4V6.500H.500ZM18 2.500H21.500V6.500H18ZM9.500 3H12.500V6H9.500Z" fill={W} /><path d="M2.500 13.500H6V17H2.500ZM16 13.500H19.500V17H16Z" fill="#535353" stroke={W} strokeWidth="1.200" /></Ico>
        </PanelSection>
      </PanelColumn>
      <PanelColumn>
        <PanelSection className="h-[42px]">
          <Ico className="mt-[6px] size-5"><path d="M7 14Q7 12 5 10A6 6 0 1 1 15 10Q13 12 13 14Z" stroke={W} strokeWidth="1.200" /><path d="M7.500 15H12.500V18L10 20L7.500 18Z" fill={W} /></Ico>
        </PanelSection>
        <PanelSection className="h-[41px]">
          <Ico className="mt-[7px] h-[18px] w-[22px]" vb="0 0 22 18"><path d="M7 16.500A6 6 0 0 1 4.500 4.800Q10 -1 16 2.500Q22 5 21 11Q20 16.500 15 16.500Z" fill="#b5b5b5" stroke={W} /><path d="M14 12.500L9 7.500Q6 5.500 3.800 8.500Q2.500 12.500 6.500 14H10M8 7Q11 3.500 14.500 4.500Q19 6 18.500 10Q17.500 14 14 13.500Q11 13 9.500 10.500M11 9.500L13.500 7.500" stroke="#4b4b4b" strokeWidth="1.300" /></Ico>
        </PanelSection>
      </PanelColumn>
    </div>
  );
}

function OptionsBar() {
  return (
    <div className="flex h-[35px] shrink-0 items-center overflow-hidden border-b-2 border-t border-[#3b3b3b] text-[12px] text-[#eee]">
      <Ico className="ml-[4px] h-[20px] w-[4px]" vb="0 0 4 20" crisp><path d="M0 .500H3M0 2.500H3M0 4.500H3M0 6.500H3M0 8.500H3M0 10.500H3M0 12.500H3M0 14.500H3M0 16.500H3M0 18.500H3" stroke="#3f3f3f" /></Ico>
      <Ico className="ml-[11px] mt-[3px] size-5"><MoveShape /></Ico>
      <Chev className="ml-[6px] mt-[3px]" />
      <i className="ml-[8px] h-[23px] w-px bg-[#3e3e3e]" />
      <Ico className="-mt-[2px] ml-[6px] size-[12px]" vb="0 0 12 12"><rect width="12" height="12" rx="2" fill="#dcdcdc" /><path d="M2.500 6L5 8.500L9.500 3.500" stroke="#333" strokeWidth="1.800" /></Ico>
      <Fit className="ml-[6px] w-[59px]">自動選択：</Fit>
      <div className="ml-[8px] mt-[2px] flex h-[23px] w-[67px] items-center rounded-[3px] border border-[#686868] bg-[#454545]"><Fit className="ml-[9px] w-[38px]">レイヤー</Fit><Chev className="ml-[6px]" /></div>
      <i className="ml-[8px] h-[23px] w-px bg-[#3e3e3e]" />
      <i className="-mt-[1px] ml-[9px] size-[12px] rounded-[2px] border border-[#7f7f7f] bg-[#4b4b4b]" />
      <Fit className="ml-[5px] w-[134px]">バウンディングボックスを表示</Fit>
      <i className="ml-[12px] h-[23px] w-px bg-[#3e3e3e]" />
      <Ico className="ml-[14px] mt-[2px] h-[14px] w-[14px]" vb="0 0 14 14" crisp><path d="M0 0H14V1H0ZM2 2H6V13H2ZM8 2H12V8H8Z" fill="#9a9a9a" /></Ico>
      <Ico className="ml-[12px] mt-[2px] h-[14px] w-[14px]" vb="0 0 14 14" crisp><path d="M0 6H14V7H0ZM2 1H6V13H2ZM8 3H12V10H8Z" fill="#9a9a9a" /></Ico>
      <Ico className="ml-[12px] size-[16px]" vb="0 0 16 16"><circle cx="9" cy="7" r="5.200" stroke={W} strokeWidth="1.600" /><path d="M5 11L1.500 15" stroke={W} strokeWidth="2" /></Ico>
      <Ico className="ml-[14px] mt-[2px] h-[14px] w-[16px]" vb="0 0 16 14" crisp><path d="M.500 .500H15.500V13.500H.500ZM0 1.500H16" stroke={W} /><path d="M2 4H4V6H2ZM2 7H4V9H2ZM2 10H4V12H2Z" fill={W} /></Ico>
      <Chev className="ml-[9px] mt-[2px]" />
      <Ico className="ml-[2px] h-[16px] w-[6px]" vb="0 0 6 16" crisp><path d="M2 0H4V16H2ZM0 3H6V7H0ZM0 10H6V13H0Z" fill="#9a9a9a" /></Ico>
      <Ico className="ml-[4px] h-[18px] w-[16px]" vb="0 0 16 18"><path d="M5 6.500H.700V16.500H15.300V6.500H11M8 12V1.500M4.500 5L8 1.500L11.500 5" stroke={W} strokeWidth="1.200" /></Ico>
      <Ico className="ml-[6px] h-[14px] w-[3px]" vb="0 0 3 14" crisp><path d="M.500 0V4M.500 7V11M2.500 0V14" stroke="#9a9a9a" /></Ico>
    </div>
  );
}

function PhotoshopWindow() {
  return (
    <div className="absolute left-[555px] top-[253px] flex h-[474px] w-[577px] flex-col overflow-hidden rounded-t-[4px] border border-[#343434] bg-[#535353] px-[3px] font-['Noto_Sans_CJK_JP',sans-serif]">
      <div className="flex h-[33px] shrink-0 text-[13px] text-[#f0f0f0]">
        <div className="flex w-[463px] shrink-0 items-center pb-[5px]">
          <span className="ml-[10px] flex h-[15px] w-[16px] shrink-0 items-center justify-center border border-[#21bdf0] bg-[#06202e] font-['Open_Sans',sans-serif] text-[9px] font-bold leading-none text-[#27bde9]">Ps</span>
          <Fit className="ml-[19px] w-[51px]">ファイル(F)</Fit>
          <Fit className="ml-[14px] w-[40px]">編集(E)</Fit>
          <Fit className="ml-[14px] w-[50px]">イメージ(I)</Fit>
          <Fit className="ml-[14px] w-[54px]">レイヤー(L)</Fit>
          <Fit className="ml-[14px] w-[41px]">書式(Y)</Fit>
          <Fit className="ml-[14px] w-[66px]">選択範囲(S)</Fit>
          <Fit className="ml-[13px] w-[27px]">フィル</Fit>
        </div>
        <div className="flex h-[19px] w-[103px] shrink-0 rounded-b-[3px] border border-t-0 border-[#3a3a3a]">
          <div className="flex w-[27px] items-center justify-center border-r border-[#3a3a3a]"><i className="mt-[5px] h-[3px] w-[10px] bg-[#a8a8a8]" /></div>
          <div className="flex w-[27px] items-center justify-center border-r border-[#3a3a3a]"><i className="mt-[1px] h-[8px] w-[10px] border-2 border-[#a8a8a8]" /></div>
          <div className="flex w-[47px] items-center justify-center"><Ico className="size-[10px]" vb="0 0 10 10"><path d="M1 1L9 9M9 1L1 9" stroke="#a8a8a8" strokeWidth="1.800" /></Ico></div>
        </div>
        <Ico className="ml-px mt-[10px] h-[12px] w-[2px]" vb="0 0 2 12" crisp><path d="M0 1H2M0 5H2M0 10H2" stroke="#ddd" /></Ico>
      </div>
      <div className="flex h-[436px] flex-col border border-t-0 border-[#3b3b3b]">
        <OptionsBar />
        <div className="flex min-h-0 flex-1">
          <ToolColumn />
          <div className="flex w-[410px] shrink-0 flex-col border-l border-[#3b3b3b] pr-px">
            <div className="flex h-[29px] border-b border-[#333] bg-[#424242]">
              <div className="flex w-[236px] items-center border-r border-[#383838] bg-[#535353] pl-[12px] text-[12px] text-[#e6e6e6]">
                <Fit className="w-[197px]">test.psd @ 100% (楕円形 1, RGB/8#)</Fit>
                <Ico className="ml-[10px] size-[7px]" vb="0 0 7 7"><path d="M.500 .500L6 6M6 .500L.500 6" stroke="#b9b9b9" strokeWidth="1.800" /></Ico>
              </div>
            </div>
            <div className="flex h-[355px] bg-[#282828]">
              <div className="flex w-[392px] pl-[69px] pt-[50px]"><div className="h-[256px] w-[256px] bg-white" /></div>
              <div className="w-[16px] bg-[#4a4a4a]" />
            </div>
            <div className="flex h-[16px] items-center bg-[#484848] text-[11px] font-medium text-white">
              <Fit className="mb-px ml-[10px] w-[29px]">100%</Fit>
              <div className="ml-[10px] flex h-full w-[184px] items-center bg-[#535353] text-[#ddd]">
                <Fit className="mb-px ml-[26px] w-[118px]">ファイル：192.0K/0 bytes</Fit>
                <Ico className="ml-[29px] h-[9px] w-[5px]" vb="0 0 5 9"><path d="M.700 .500L4 4.500L.700 8.500" stroke="#ccc" /></Ico>
              </div>
            </div>
          </div>
          <Panels />
        </div>
      </div>
    </div>
  );
}

export default function App() {
  return (
    <div className="relative h-[741px] w-[1156px] overflow-hidden bg-[#91bdd1]">
      <Wallpaper />
      <TimerWindow />
      <ClipWindow />
      <PhotoshopWindow />
    </div>
  );
}
